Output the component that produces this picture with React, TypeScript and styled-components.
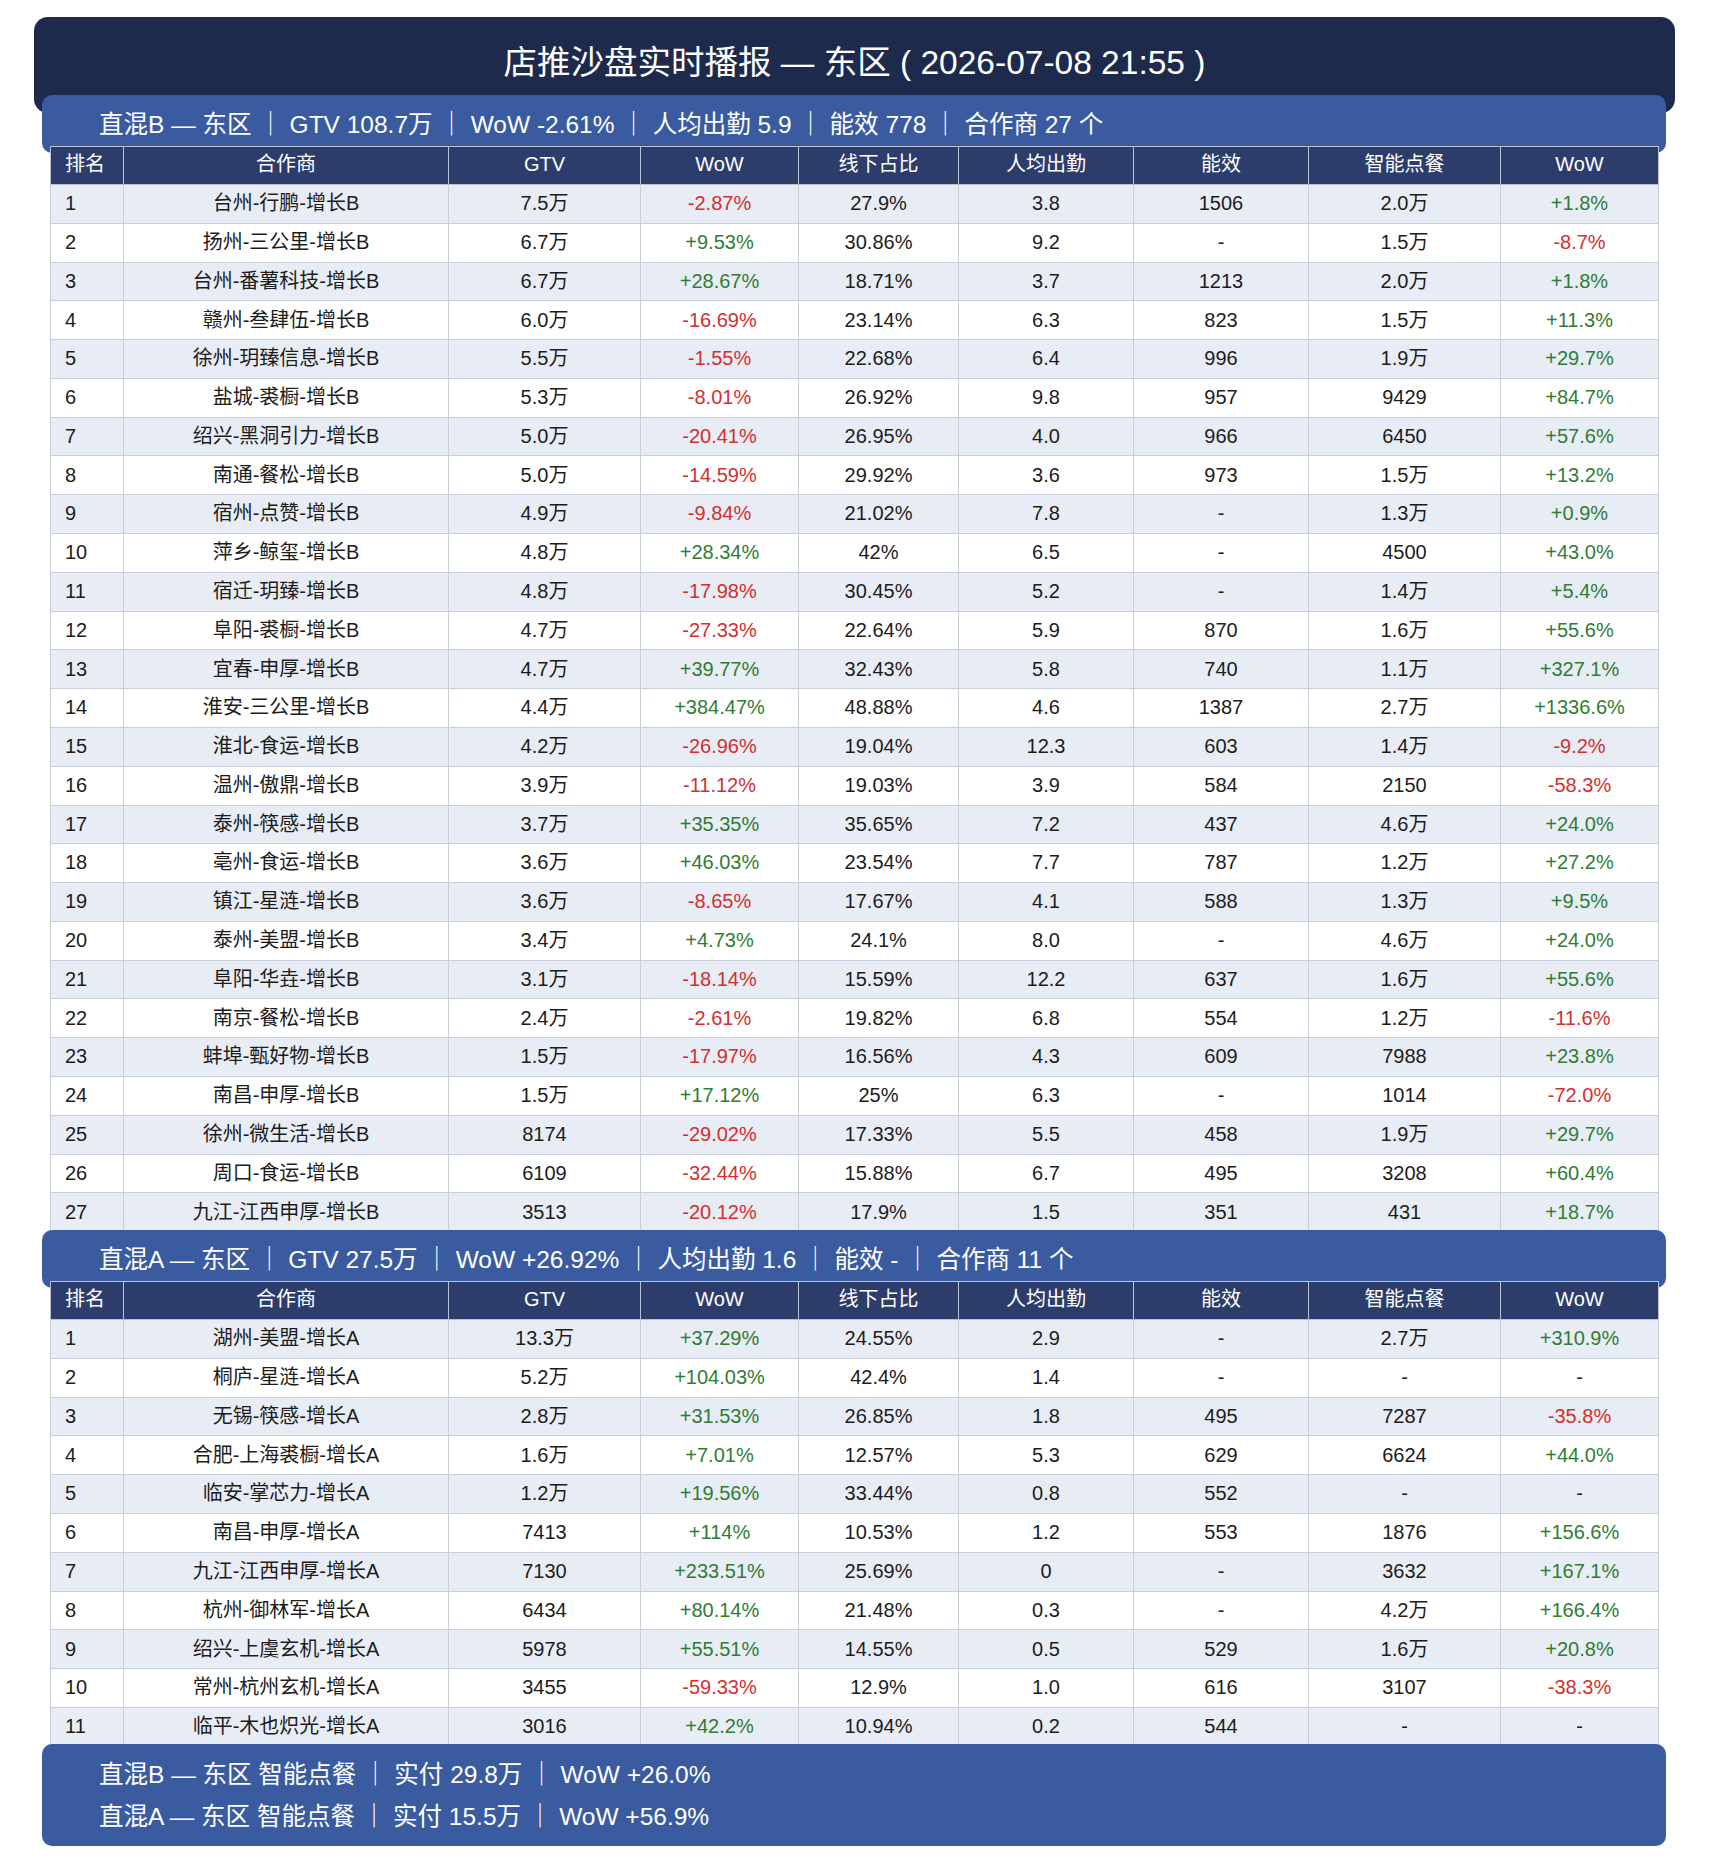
import styled, { createGlobalStyle } from "styled-components";

const GlobalStyle = createGlobalStyle`
  body {
    margin: 0;
    background: #ffffff;
    font-family: "Liberation Sans", "Noto Sans CJK SC", Arial, sans-serif;
  }
`;

type Row = [string, string, string, string, string, string, string, string];

const groupB: Row[] = [
  ["台州-行鹏-增长B", "7.5万", "-2.87%", "27.9%", "3.8", "1506", "2.0万", "+1.8%"],
  ["扬州-三公里-增长B", "6.7万", "+9.53%", "30.86%", "9.2", "-", "1.5万", "-8.7%"],
  ["台州-番薯科技-增长B", "6.7万", "+28.67%", "18.71%", "3.7", "1213", "2.0万", "+1.8%"],
  ["赣州-叁肆伍-增长B", "6.0万", "-16.69%", "23.14%", "6.3", "823", "1.5万", "+11.3%"],
  ["徐州-玥臻信息-增长B", "5.5万", "-1.55%", "22.68%", "6.4", "996", "1.9万", "+29.7%"],
  ["盐城-裘橱-增长B", "5.3万", "-8.01%", "26.92%", "9.8", "957", "9429", "+84.7%"],
  ["绍兴-黑洞引力-增长B", "5.0万", "-20.41%", "26.95%", "4.0", "966", "6450", "+57.6%"],
  ["南通-餐松-增长B", "5.0万", "-14.59%", "29.92%", "3.6", "973", "1.5万", "+13.2%"],
  ["宿州-点赞-增长B", "4.9万", "-9.84%", "21.02%", "7.8", "-", "1.3万", "+0.9%"],
  ["萍乡-鲸玺-增长B", "4.8万", "+28.34%", "42%", "6.5", "-", "4500", "+43.0%"],
  ["宿迁-玥臻-增长B", "4.8万", "-17.98%", "30.45%", "5.2", "-", "1.4万", "+5.4%"],
  ["阜阳-裘橱-增长B", "4.7万", "-27.33%", "22.64%", "5.9", "870", "1.6万", "+55.6%"],
  ["宜春-申厚-增长B", "4.7万", "+39.77%", "32.43%", "5.8", "740", "1.1万", "+327.1%"],
  ["淮安-三公里-增长B", "4.4万", "+384.47%", "48.88%", "4.6", "1387", "2.7万", "+1336.6%"],
  ["淮北-食运-增长B", "4.2万", "-26.96%", "19.04%", "12.3", "603", "1.4万", "-9.2%"],
  ["温州-傲鼎-增长B", "3.9万", "-11.12%", "19.03%", "3.9", "584", "2150", "-58.3%"],
  ["泰州-筷感-增长B", "3.7万", "+35.35%", "35.65%", "7.2", "437", "4.6万", "+24.0%"],
  ["亳州-食运-增长B", "3.6万", "+46.03%", "23.54%", "7.7", "787", "1.2万", "+27.2%"],
  ["镇江-星涟-增长B", "3.6万", "-8.65%", "17.67%", "4.1", "588", "1.3万", "+9.5%"],
  ["泰州-美盟-增长B", "3.4万", "+4.73%", "24.1%", "8.0", "-", "4.6万", "+24.0%"],
  ["阜阳-华垚-增长B", "3.1万", "-18.14%", "15.59%", "12.2", "637", "1.6万", "+55.6%"],
  ["南京-餐松-增长B", "2.4万", "-2.61%", "19.82%", "6.8", "554", "1.2万", "-11.6%"],
  ["蚌埠-甄好物-增长B", "1.5万", "-17.97%", "16.56%", "4.3", "609", "7988", "+23.8%"],
  ["南昌-申厚-增长B", "1.5万", "+17.12%", "25%", "6.3", "-", "1014", "-72.0%"],
  ["徐州-微生活-增长B", "8174", "-29.02%", "17.33%", "5.5", "458", "1.9万", "+29.7%"],
  ["周口-食运-增长B", "6109", "-32.44%", "15.88%", "6.7", "495", "3208", "+60.4%"],
  ["九江-江西申厚-增长B", "3513", "-20.12%", "17.9%", "1.5", "351", "431", "+18.7%"],
];

const groupA: Row[] = [
  ["湖州-美盟-增长A", "13.3万", "+37.29%", "24.55%", "2.9", "-", "2.7万", "+310.9%"],
  ["桐庐-星涟-增长A", "5.2万", "+104.03%", "42.4%", "1.4", "-", "-", "-"],
  ["无锡-筷感-增长A", "2.8万", "+31.53%", "26.85%", "1.8", "495", "7287", "-35.8%"],
  ["合肥-上海裘橱-增长A", "1.6万", "+7.01%", "12.57%", "5.3", "629", "6624", "+44.0%"],
  ["临安-掌芯力-增长A", "1.2万", "+19.56%", "33.44%", "0.8", "552", "-", "-"],
  ["南昌-申厚-增长A", "7413", "+114%", "10.53%", "1.2", "553", "1876", "+156.6%"],
  ["九江-江西申厚-增长A", "7130", "+233.51%", "25.69%", "0", "-", "3632", "+167.1%"],
  ["杭州-御林军-增长A", "6434", "+80.14%", "21.48%", "0.3", "-", "4.2万", "+166.4%"],
  ["绍兴-上虞玄机-增长A", "5978", "+55.51%", "14.55%", "0.5", "529", "1.6万", "+20.8%"],
  ["常州-杭州玄机-增长A", "3455", "-59.33%", "12.9%", "1.0", "616", "3107", "-38.3%"],
  ["临平-木也炽光-增长A", "3016", "+42.2%", "10.94%", "0.2", "544", "-", "-"],
];

const headers = ["排名", "合作商", "GTV", "WoW", "线下占比", "人均出勤", "能效", "智能点餐", "WoW"];
const colWidths = [73, 325, 192, 158, 160, 175, 175, 192, 158];

const Page = styled.div`
  width: 1641px;
  margin: 17px auto 0;
  padding-bottom: 23px;
`;

const TitleBar = styled.div`
  height: 96px;
  box-sizing: border-box;
  padding-top: 26px;
  border-radius: 14px;
  background: #1d2a4c;
  color: #ffffff;
  font-size: 33.5px;
  line-height: 40px;
  text-align: center;
  white-space: pre;
`;

const SectionBar = styled.div<{ $overlap: number }>`
  margin: -${(p) => p.$overlap}px 9px 0 8px;
  height: 58px;
  box-sizing: border-box;
  padding: 16px 0 0 57px;
  border-radius: 10px;
  background: #3a5ba0;
  color: #ffffff;
  font-size: 24.5px;
  line-height: 28px;
  white-space: pre;
`;

const Table = styled.table`
  margin: -7px 0 0 16px;
  width: 1608px;
  border-collapse: collapse;
  table-layout: fixed;
  font-size: 20px;
`;

const HeadCell = styled.th<{ $first?: boolean }>`
  padding: 6px 0 9px;
  padding-left: ${(p) => (p.$first ? "14px" : "0")};
  border: 1px solid #b9c1d2;
  background: #2c3d6b;
  color: #ffffff;
  font-weight: normal;
  line-height: 22px;
  text-align: ${(p) => (p.$first ? "left" : "center")};
`;

const BodyRow = styled.tr<{ $striped: boolean }>`
  background: ${(p) => (p.$striped ? "#e8ecf4" : "#ffffff")};
`;

const Cell = styled.td<{ $first?: boolean; $tone: "up" | "down" | "plain" }>`
  padding: 7.2px 0 8.6px;
  padding-left: ${(p) => (p.$first ? "14px" : "0")};
  border: 1px solid #c9cfda;
  line-height: 22px;
  text-align: ${(p) => (p.$first ? "left" : "center")};
  color: ${(p) =>
    p.$tone === "up" ? "#2e7d32" : p.$tone === "down" ? "#d32f2f" : "#1c1c1c"};
  white-space: nowrap;
`;

const Footer = styled.div`
  margin: -3px 9px 0 8px;
  padding: 10px 0 8px 57px;
  border-radius: 10px;
  background: #3a5ba0;
  color: #ffffff;
  font-size: 24.5px;
  line-height: 42px;
  white-space: pre;
`;

function toneOf(value: string): "up" | "down" | "plain" {
  if (value.startsWith("+")) return "up";
  if (value.startsWith("-") && value.length > 1) return "down";
  return "plain";
}

function RankTable({ rows }: { rows: Row[] }) {
  return (
    <Table>
      <colgroup>
        {colWidths.map((w, i) => (
          <col key={i} style={{ width: w }} />
        ))}
      </colgroup>
      <thead>
        <tr>
          {headers.map((h, i) => (
            <HeadCell key={i} $first={i === 0}>
              {h}
            </HeadCell>
          ))}
        </tr>
      </thead>
      <tbody>
        {rows.map((r, idx) => (
          <BodyRow key={idx} $striped={idx % 2 === 0}>
            <Cell $first $tone="plain">
              {idx + 1}
            </Cell>
            {r.map((v, i) => (
              <Cell key={i} $tone={i === 2 || i === 7 ? toneOf(v) : "plain"}>
                {v}
              </Cell>
            ))}
          </BodyRow>
        ))}
      </tbody>
    </Table>
  );
}

export default function App() {
  return (
    <>
      <GlobalStyle />
      <Page>
        <TitleBar>店推沙盘实时播报 — 东区 ( 2026-07-08 21:55 )</TitleBar>
        <SectionBar $overlap={18}>
          直混B — 东区 ｜ GTV 108.7万 ｜ WoW -2.61% ｜ 人均出勤 5.9 ｜ 能效 778 ｜ 合作商 27 个
        </SectionBar>
        <RankTable rows={groupB} />
        <SectionBar $overlap={2}>
          直混A — 东区 ｜ GTV 27.5万 ｜ WoW +26.92% ｜ 人均出勤 1.6 ｜ 能效 - ｜ 合作商 11 个
        </SectionBar>
        <RankTable rows={groupA} />
        <Footer>
          {"直混B — 东区 智能点餐 ｜ 实付 29.8万 ｜ WoW +26.0%\n直混A — 东区 智能点餐 ｜ 实付 15.5万 ｜ WoW +56.9%"}
        </Footer>
      </Page>
    </>
  );
}
